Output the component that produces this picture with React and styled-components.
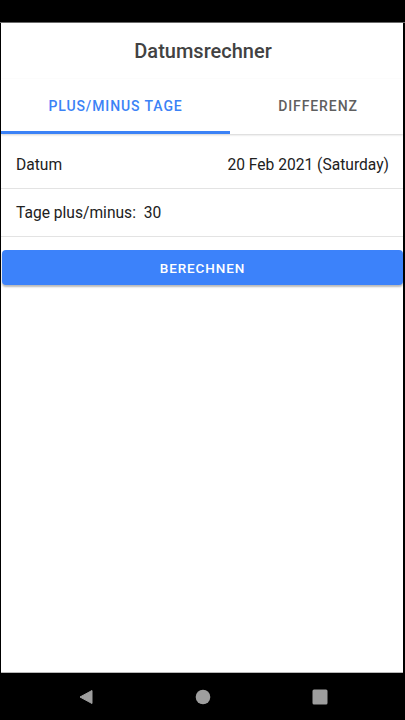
import React from "react";
import styled, { createGlobalStyle } from "styled-components";

const Global = createGlobalStyle`
  html, body { margin: 0; padding: 0; background: #000; }
  body { font-family: Roboto, "Noto Sans", sans-serif; }
  * { box-sizing: border-box; }
`;

const Phone = styled.div`
  width: 405px;
  height: 720px;
  display: flex;
  flex-direction: column;
  background: #000;
`;

const StatusBar = styled.div`
  height: 23px;
  background: #000;
  border-bottom: 1px solid #6a6a6a;
  flex-shrink: 0;
`;

const Screen = styled.div`
  flex: 1;
  background: #fff;
  margin: 0 2px 0 1px;
  display: flex;
  flex-direction: column;
  border-bottom: 1px solid #b8b8b8;
`;

const Title = styled.h1`
  margin: 0;
  height: 56px;
  display: flex;
  align-items: center;
  justify-content: center;
  font-size: 20px;
  font-weight: 500;
  color: #424242;
  padding-left: 2px;
`;

const TabBar = styled.div`
  display: grid;
  grid-template-columns: 229px 1fr;
  height: 55px;
  box-shadow: 0 1px 2px rgba(0,0,0,0.18);
  position: relative;
  z-index: 1;
`;

const Tab = styled.div`
  display: flex;
  align-items: center;
  justify-content: center;
  font-size: 14px;
  font-weight: 500;
  letter-spacing: 0.9px;
  color: ${p => (p.$active ? "#3b82f6" : "#5f5f5f")};
  border-bottom: 3px solid ${p => (p.$active ? "#3b82f6" : "transparent")};
  padding-top: 2px;
  padding-left: ${p => (p.$active ? "0" : "3px")};
`;

const Row = styled.div`
  height: ${p => p.$h}px;
  display: flex;
  align-items: center;
  justify-content: space-between;
  padding: ${p => p.$pt}px 14px 0 15px;
  border-bottom: 1px solid #e3e3e3;
  font-size: 15.6px;
  color: #212121;
`;

const Value = styled.span`
  font-size: 15.6px;
  color: #212121;
`;

const Button = styled.button`
  margin: 13px 0 0 1px;
  height: 35px;
  border: none;
  border-radius: 4px;
  background: #3c82fa;
  color: #fff;
  font-family: Roboto, sans-serif;
  font-size: 13.5px;
  font-weight: 500;
  letter-spacing: 0.9px;
  box-shadow: 0 2px 2px rgba(0,0,0,0.28);
  width: 401px;
`;

const NavBar = styled.div`
  height: 47px;
  flex-shrink: 0;
  background: #000;
  display: grid;
  grid-template-columns: 1fr 1fr 1fr;
  align-items: center;
  justify-items: center;
  padding: 0 27px 0 27px;
`;

export default function App() {
  return (
    <>
      <Global />
      <Phone>
        <StatusBar />
        <Screen>
          <Title>Datumsrechner</Title>
          <TabBar>
            <Tab $active>PLUS/MINUS TAGE</Tab>
            <Tab>DIFFERENZ</Tab>
          </TabBar>
          <Row $h={55} $pt={7}>
            <span>Datum</span>
            <Value>20 Feb 2021 (Saturday)</Value>
          </Row>
          <Row $h={48} $pt={0}>
            <span>Tage plus/minus:&nbsp; 30</span>
          </Row>
          <Button>BERECHNEN</Button>
        </Screen>
        <NavBar>
          <svg width="16" height="16" viewBox="0 0 16 16">
            <path d="M14 1.5 L14 14.5 L2 8 Z" fill="#9e9e9e" stroke="#9e9e9e" strokeWidth="1" strokeLinejoin="round" />
          </svg>
          <svg width="16" height="16" viewBox="0 0 16 16">
            <circle cx="8" cy="8" r="7.3" fill="#9e9e9e" />
          </svg>
          <svg width="16" height="16" viewBox="0 0 16 16">
            <rect x="0.5" y="0.5" width="15" height="15" rx="1.5" fill="#9e9e9e" />
          </svg>
        </NavBar>
      </Phone>
    </>
  );
}
